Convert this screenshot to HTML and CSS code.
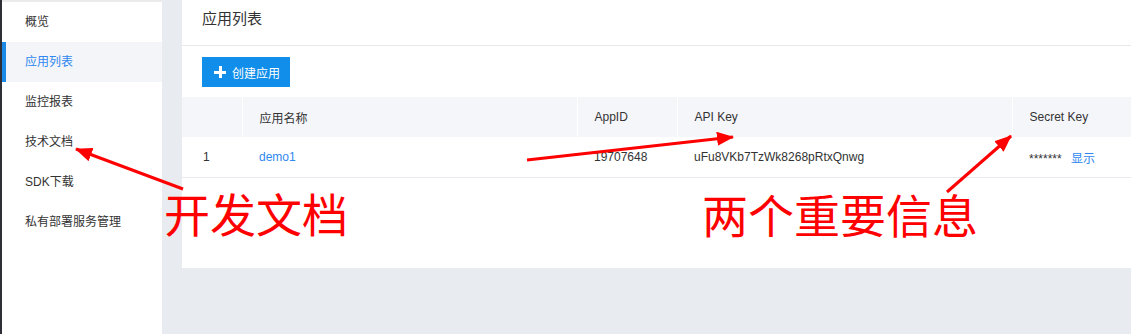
FILE: index.html
```html
<!DOCTYPE html>
<html lang="zh">
<head>
<meta charset="utf-8">
<title>应用列表</title>
<link rel="stylesheet" href="styles.css">
</head>
<body>
<div class="app">
  <div class="edge"></div>
  <nav class="sidebar">
    <div class="nav-item">概览</div>
    <div class="nav-item active">应用列表</div>
    <div class="nav-item">监控报表</div>
    <div class="nav-item">技术文档</div>
    <div class="nav-item">SDK下载</div>
    <div class="nav-item">私有部署服务管理</div>
  </nav>
  <main class="main">
    <section class="panel">
      <header class="panel-head">应用列表</header>
      <div class="toolbar">
        <button class="btn-primary"><span class="plus"></span>创建应用</button>
      </div>
      <table class="grid">
        <colgroup>
          <col class="c-idx"><col class="c-name"><col class="c-id"><col class="c-key"><col>
        </colgroup>
        <thead>
          <tr><th></th><th>应用名称</th><th>AppID</th><th>API Key</th><th>Secret Key</th></tr>
        </thead>
        <tbody>
          <tr>
            <td class="idx">1</td>
            <td><a class="link">demo1</a></td>
            <td>19707648</td>
            <td>uFu8VKb7TzWk8268pRtxQnwg</td>
            <td>******* <a class="link show">显示</a></td>
          </tr>
        </tbody>
      </table>
    </section>
  </main>

  <svg class="arrows" width="1131" height="334" viewBox="0 0 1131 334">
    <defs>
      <marker id="head" markerUnits="userSpaceOnUse" markerWidth="18" markerHeight="14" refX="16" refY="7" orient="auto">
        <path d="M0,0 L17,7 L0,14 Z" fill="#ff0000"/>
      </marker>
    </defs>
    <line x1="183" y1="189" x2="76" y2="149" stroke="#ff0000" stroke-width="3" marker-end="url(#head)"/>
    <line x1="527" y1="160" x2="733" y2="137" stroke="#ff0000" stroke-width="3" marker-end="url(#head)"/>
    <line x1="947" y1="192" x2="1011" y2="136" stroke="#ff0000" stroke-width="3" marker-end="url(#head)"/>
  </svg>
  <div class="note note-doc">开发文档</div>
  <div class="note note-key">两个重要信息</div>
</div>
</body>
</html>
```

FILE: styles.css
```css
html, body {
  margin: 0;
  padding: 0;
}
body {
  font-family: "Liberation Sans", "Noto Sans CJK SC", sans-serif;
  font-size: 12px;
  color: #333;
}
.app {
  position: relative;
  display: flex;
  width: 1131px;
  height: 334px;
  background: #e8ebef;
  overflow: hidden;
}
.edge {
  width: 2px;
  background: #2e2e36;
  flex: none;
}
.sidebar {
  width: 160px;
  flex: none;
  background: #fff;
  border-top: 2px solid #ebebeb;
  box-sizing: border-box;
}
.nav-item {
  height: 40px;
  line-height: 40px;
  padding-left: 19px;
  color: #333;
  border-left: 4px solid transparent;
  box-sizing: border-box;
}
.nav-item.active {
  background: #f4f5f8;
  border-left-color: #1a8ae6;
  color: #2f88f0;
}
.main {
  flex: 1;
  padding-left: 20px;
}
.panel {
  background: #fff;
  height: 268px;
}
.panel-head {
  height: 46px;
  line-height: 38px;
  padding-left: 20px;
  font-size: 15px;
  color: #333;
  border-bottom: 1px solid #e8e8e8;
  box-sizing: border-box;
}
.toolbar {
  padding: 11px 0 10px 20px;
  display: flex;
}
.btn-primary {
  display: flex;
  align-items: center;
  height: 30px;
  width: 88px;
  padding: 0 0 0 12px;
  border: 0;
  background: #108ee9;
  color: #fff;
  font-family: inherit;
  font-size: 12px;
  box-sizing: border-box;
}
.plus {
  position: relative;
  width: 12px;
  height: 12px;
  margin-right: 6px;
}
.plus::before, .plus::after {
  content: "";
  position: absolute;
  background: #fff;
}
.plus::before {
  left: 0; right: 0; top: 5px; height: 3px;
}
.plus::after {
  top: 0; bottom: 0; left: 5px; width: 3px;
}
.grid {
  width: 100%;
  border-collapse: collapse;
  table-layout: fixed;
}
.c-idx { width: 60px; }
.c-name { width: 335px; }
.c-id { width: 100px; }
.c-key { width: 335px; }
.grid th {
  height: 40px;
  background: #f5f6fa;
  font-weight: normal;
  text-align: left;
  padding: 0 0 0 17px;
  border-left: 1px solid #fff;
  color: #333;
}
.grid th:first-child { border-left: 0; }
.grid td {
  height: 40px;
  padding: 0 0 0 17px;
  border-bottom: 1px solid #e8eaf0;
  color: #333;
  white-space: nowrap;
}
.grid td.idx { padding-left: 21px; }
.link {
  color: #2f88f0;
  cursor: pointer;
}
.show { margin-left: 6px; }
.arrows {
  position: absolute;
  left: 0;
  top: 0;
  pointer-events: none;
}
.note {
  position: absolute;
  font-family: "Noto Sans CJK SC", sans-serif;
  font-size: 46px;
  line-height: 46px;
  color: #ff0000;
  white-space: nowrap;
}
.note-doc { left: 164px; top: 189px; }
.note-key { left: 702px; top: 190px; }
```
